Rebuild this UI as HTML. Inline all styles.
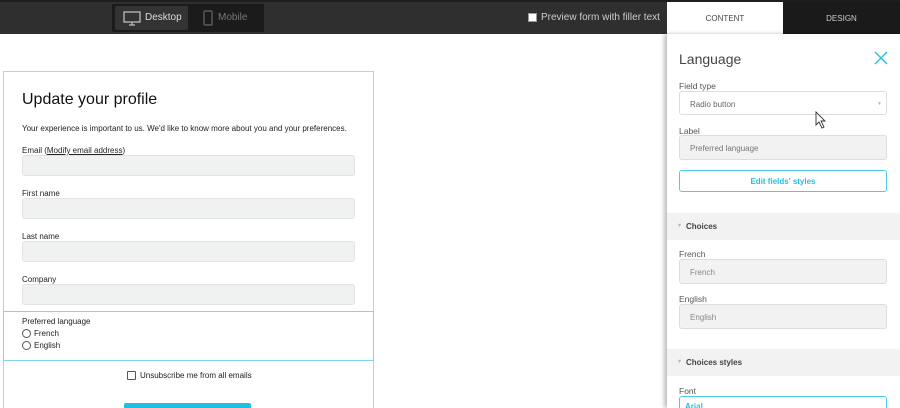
<!DOCTYPE html>
<html style="width:900px;height:408px;overflow:hidden"><head><style>
*{box-sizing:border-box;margin:0;padding:0}
html,body{width:900px;height:408px;overflow:hidden}
body{background:#fff;font-family:"Liberation Sans",sans-serif;position:relative}
.abs{position:absolute}
.top{left:0;top:0;width:900px;height:34px;background:#2f2f2f;border-top:2px solid #1e1e1e}
.seg{left:112px;top:4px;width:152px;height:28px;background:#1b1b1b}
.dk{left:115px;top:6px;width:73px;height:24px;background:#333;border-radius:2px;color:#ddd;font-size:10px}
.form{left:3px;top:71px;width:371px;height:337px;border:1px solid #ccc;border-bottom:none;background:#fff}
.lbl{font-size:8px;color:#222;left:22px}
.inp{left:22px;width:333px;height:21px;background:#f0f1f1;border:1px solid #e3e3e3;border-radius:3px}
.panel{left:667px;top:34px;width:233px;height:374px;background:#fff;box-shadow:-3px 0 4px rgba(0,0,0,.25)}
.pl{left:679px;font-size:8.5px;color:#555}
.pi{left:679px;width:208px;height:25px;border:1px solid #ddd;border-radius:3px;background:#f2f2f2;font-size:8px;color:#888;padding:8px 0 0 10px}
.sec{left:667px;width:233px;height:27px;background:#f2f2f2;font-size:8px;font-weight:bold;color:#444;padding:9px 0 0 19px}
.sec:before{content:"▾";position:absolute;left:11px;top:9px;font-size:6px;color:#bbb}
</style></head><body>
<div class="abs top"></div>
<div class="abs seg"></div>
<div class="abs dk"></div>
<svg class="abs" style="left:123px;top:11px" width="18" height="15"><rect x="1" y="1" width="16" height="10" fill="none" stroke="#bbb" stroke-width="1.3"/><path d="M6 14h6M9 11v3" stroke="#bbb" stroke-width="1.3"/></svg>
<div class="abs" style="left:145px;top:12px;font-size:10px;color:#ddd">Desktop</div>
<svg class="abs" style="left:203px;top:10px" width="10" height="16"><rect x="1" y="1" width="8" height="14" rx="1" fill="none" stroke="#666" stroke-width="1.2"/></svg>
<div class="abs" style="left:218px;top:12px;font-size:10px;color:#777">Mobile</div>
<div class="abs" style="left:528px;top:13px;width:9px;height:9px;background:#fff;border:1px solid #999"></div>
<div class="abs" style="left:541px;top:12px;font-size:10px;color:#ccc">Preview form with filler text</div>
<div class="abs" style="left:667px;top:2px;width:116px;height:33px;background:#fff;font-size:8px;color:#444;text-align:center;padding-top:12px">CONTENT</div>
<div class="abs" style="left:783px;top:2px;width:117px;height:32px;background:#1a1a1a;font-size:8px;color:#ccc;text-align:center;padding-top:12px">DESIGN</div>

<div class="abs form"></div>
<div class="abs" style="left:22px;top:91px;font-size:16px;color:#111">Update your profile</div>
<div class="abs lbl" style="top:124px">Your experience is important to us. We'd like to know more about you and your preferences.</div>
<div class="abs lbl" style="top:146px">Email (<u>Modify email address</u>)</div>
<div class="abs inp" style="top:155px"></div>
<div class="abs lbl" style="top:189px">First name</div>
<div class="abs inp" style="top:198px"></div>
<div class="abs lbl" style="top:232px">Last name</div>
<div class="abs inp" style="top:241px"></div>
<div class="abs lbl" style="top:275px">Company</div>
<div class="abs inp" style="top:284px"></div>
<div class="abs" style="left:3px;top:311px;width:371px;height:50px;border:1px solid #7fd6ec"></div>
<div class="abs lbl" style="top:317px">Preferred language</div>
<div class="abs" style="left:22px;top:329px;width:9px;height:9px;border:1px solid #555;border-radius:50%"></div>
<div class="abs lbl" style="left:34px;top:329px">French</div>
<div class="abs" style="left:22px;top:341px;width:9px;height:9px;border:1px solid #555;border-radius:50%"></div>
<div class="abs lbl" style="left:34px;top:341px">English</div>
<div class="abs" style="left:127px;top:371px;width:9px;height:9px;border:1px solid #555;border-radius:1px"></div>
<div class="abs lbl" style="left:140px;top:371px">Unsubscribe me from all emails</div>
<div class="abs" style="left:124px;top:403px;width:127px;height:5px;background:#1ec0e4;border-radius:2px 2px 0 0"></div>

<div class="abs panel"></div>
<div class="abs" style="left:679px;top:51px;font-size:14px;color:#444">Language</div>
<svg class="abs" style="left:874px;top:51px" width="14" height="14"><path d="M1 1L13 13M13 1L1 13" stroke="#29bde0" stroke-width="1.4"/></svg>
<div class="abs pl" style="top:81px">Field type</div>
<div class="abs pi" style="top:91px;background:#fff;height:24px;color:#666">Radio button<span style="position:absolute;right:4px;top:9px;font-size:5px;color:#bbb">▼</span></div>
<svg class="abs" style="left:815px;top:111px" width="12" height="18"><path d="M1 1L1 14L4 11L7 17L9 16L6 10L10 10Z" fill="#fff" stroke="#333" stroke-width="0.9"/></svg>
<div class="abs pl" style="top:126px">Label</div>
<div class="abs pi" style="top:135px;color:#777">Preferred language</div>
<div class="abs" style="left:679px;top:170px;width:208px;height:22px;border:1px solid #4dcbe8;border-radius:3px;color:#29bde0;font-size:8px;font-weight:bold;text-align:center;padding-top:6px">Edit fields' styles</div>
<div class="abs sec" style="top:213px">Choices</div>
<div class="abs pl" style="top:249px">French</div>
<div class="abs pi" style="top:259px">French</div>
<div class="abs pl" style="top:294px">English</div>
<div class="abs pi" style="top:304px">English</div>
<div class="abs sec" style="top:349px">Choices styles</div>
<div class="abs pl" style="top:386px">Font</div>
<div class="abs" style="left:679px;top:396px;width:208px;height:14px;border:1px solid #4dcbe8;border-bottom:none;border-radius:3px 3px 0 0;font-size:8px;color:#29bde0;padding:5px 0 0 5px;font-weight:bold;overflow:hidden">Arial</div>
</body></html>
